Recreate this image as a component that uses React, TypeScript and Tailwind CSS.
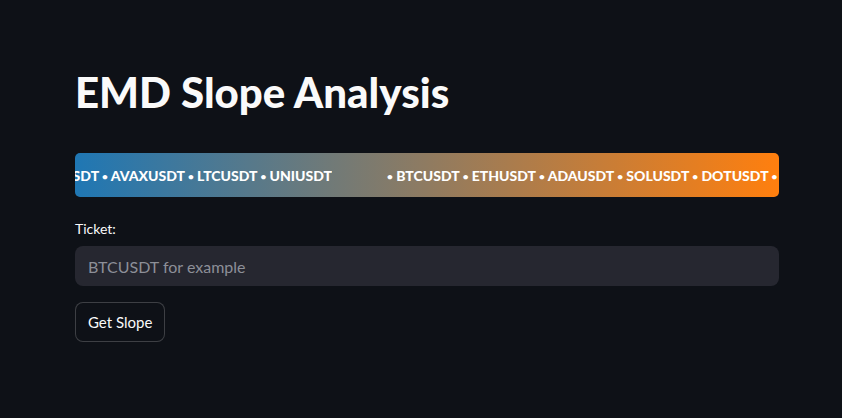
const tickers = ["BTCUSDT", "ETHUSDT", "ADAUSDT", "SOLUSDT", "DOTUSDT", "AVAXUSDT", "LTCUSDT", "UNIUSDT"];

function TickerRow() {
  return (
    <span className="whitespace-nowrap">
      {tickers.map((t, i) => (
        <span key={t}>
          <span className="text-[10px] align-[1px]">•</span> {t}
          {i < tickers.length - 1 ? " " : ""}
        </span>
      ))}
    </span>
  );
}

export default function App() {
  return (
    <div
      className="min-h-[418px] w-full bg-[#0e1117] text-[#fafafa]"
      style={{ fontFamily: "Lato, 'Noto Sans', sans-serif" }}
    >
      <div className="pl-[75px] pr-[63px] pt-[66px]">
        {/* Title */}
        <h1 className="text-[42px] font-black leading-[52px]">EMD Slope Analysis</h1>

        {/* Ticker banner */}
        <div className="mt-[35px] flex h-[44px] items-center overflow-hidden rounded-[5px] bg-[linear-gradient(90deg,#1f77b4,#ff7f0e)] text-[14px] font-black text-white">
          <div className="flex w-[257px] shrink-0 justify-end overflow-hidden">
            <TickerRow />
          </div>
          <div className="ml-[55px] shrink-0">
            <TickerRow />
          </div>
        </div>

        {/* Input */}
        <label className="mt-[22px] block text-[14px] leading-[20px]">Ticket:</label>
        <input
          placeholder="BTCUSDT for example"
          className="mt-[7px] h-[40px] w-full rounded-[8px] bg-[#262730] px-[13px] text-[16px] text-[#fafafa] outline-none placeholder:text-[#8d8f98]"
        />

        {/* Button */}
        <button className="mt-[16px] h-[40px] rounded-[8px] border border-[#fafafa33] bg-[#0e1117] px-[12px] text-[15px]">
          Get Slope
        </button>
      </div>
    </div>
  );
}
